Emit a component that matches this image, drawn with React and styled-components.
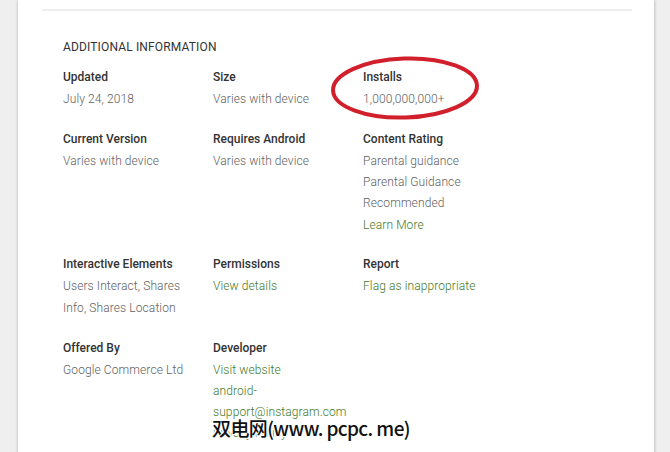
import React from 'react';
import styled, { createGlobalStyle } from 'styled-components';

const GlobalStyle = createGlobalStyle`
  html, body {
    margin: 0;
    padding: 0;
    background: #efefef;
    font-family: Roboto, "Noto Sans", Arial, sans-serif;
    overflow: hidden;
  }
`;

const Page = styled.div`
  width: 670px;
  height: 452px;
  overflow: hidden;
  position: relative;
`;

const Card = styled.div`
  margin-left: 18px;
  width: 636px;
  min-height: 480px;
  background: #fff;
  box-shadow: 0 0 3px rgba(0, 0, 0, 0.22), 1px 0 4px rgba(0, 0, 0, 0.08);
  padding-top: 9px;
  position: relative;
`;

const Divider = styled.div`
  margin: 0 22px 0 24px;
  height: 2px;
  background: #eeeeee;
`;

const Section = styled.div`
  padding: 26px 0 0 45px;
`;

const Heading = styled.h2`
  margin: 0 0 9px;
  font-size: 12px;
  line-height: 20px;
  font-weight: 400;
  color: #333;
  letter-spacing: 0.15px;
`;

const Grid = styled.div`
  display: grid;
  grid-template-columns: repeat(3, 150px);
  row-gap: 17.5px;
`;

const Item = styled.div`
  display: flex;
  flex-direction: column;
`;

const Label = styled.div`
  font-size: 12px;
  line-height: 22px;
  font-weight: 500;
  color: #333;
  margin-bottom: 1px;
`;

const Value = styled.div`
  font-size: 12px;
  line-height: 21.3px;
  font-weight: 300;
  letter-spacing: 0.1px;
  color: ${p => (p.$link ? '#3f7a2a' : '#616161')};
  white-space: ${p => (p.$wrap ? 'normal' : 'nowrap')};
  max-width: 140px;
`;

const Ellipse = styled.svg`
  position: absolute;
  left: 328px;
  top: 54px;
  pointer-events: none;
`;

const Watermark = styled.div`
  position: absolute;
  left: 212px;
  top: 414px;
  font-family: "Noto Sans CJK SC", "DejaVu Sans", sans-serif;
  font-size: 19px;
  line-height: 28px;
  font-weight: 500;
  color: #111;
  letter-spacing: -0.6px;
  text-shadow: 1px 0 0 #fff, -1px 0 0 #fff, 0 1px 0 #fff, 0 -1px 0 #fff,
    1px 1px 0 #fff, -1px -1px 0 #fff, 1px -1px 0 #fff, -1px 1px 0 #fff;
  white-space: nowrap;
`;

const items = [
  { label: 'Updated', values: [{ t: 'July 24, 2018' }] },
  { label: 'Size', values: [{ t: 'Varies with device' }] },
  { label: 'Installs', values: [{ t: '1,000,000,000+' }] },
  { label: 'Current Version', values: [{ t: 'Varies with device' }] },
  { label: 'Requires Android', values: [{ t: 'Varies with device' }] },
  {
    label: 'Content Rating',
    values: [
      { t: 'Parental guidance' },
      { t: 'Parental Guidance' },
      { t: 'Recommended' },
      { t: 'Learn More', link: true },
    ],
  },
  { label: 'Interactive Elements', values: [{ t: 'Users Interact, Shares Info, Shares Location', wrap: true }] },
  { label: 'Permissions', values: [{ t: 'View details', link: true }] },
  { label: 'Report', values: [{ t: 'Flag as inappropriate', link: true }] },
  { label: 'Offered By', values: [{ t: 'Google Commerce Ltd' }] },
  {
    label: 'Developer',
    values: [
      { t: 'Visit website', link: true },
      { t: 'android-', link: true },
      { t: 'support@instagram.com', link: true },
      { t: 'Privacy Policy', link: true },
    ],
  },
];

export default function App() {
  return (
    <Page>
      <GlobalStyle />
      <Card>
        <Divider />
        <Section>
          <Heading>ADDITIONAL INFORMATION</Heading>
          <Grid>
            {items.map(item => (
              <Item key={item.label}>
                <Label>{item.label}</Label>
                {item.values.map(v => (
                  <Value key={v.t} $link={v.link} $wrap={v.wrap}>{v.t}</Value>
                ))}
              </Item>
            ))}
          </Grid>
        </Section>
      </Card>
      <Ellipse width="156" height="68" viewBox="0 0 156 68">
        <ellipse cx="77" cy="34" rx="72" ry="29.5" fill="none" stroke="#d11f2c" strokeWidth="4" transform="rotate(-2 77 34)" />
      </Ellipse>
      <Watermark>双电网(www. pcpc. me)</Watermark>
    </Page>
  );
}
